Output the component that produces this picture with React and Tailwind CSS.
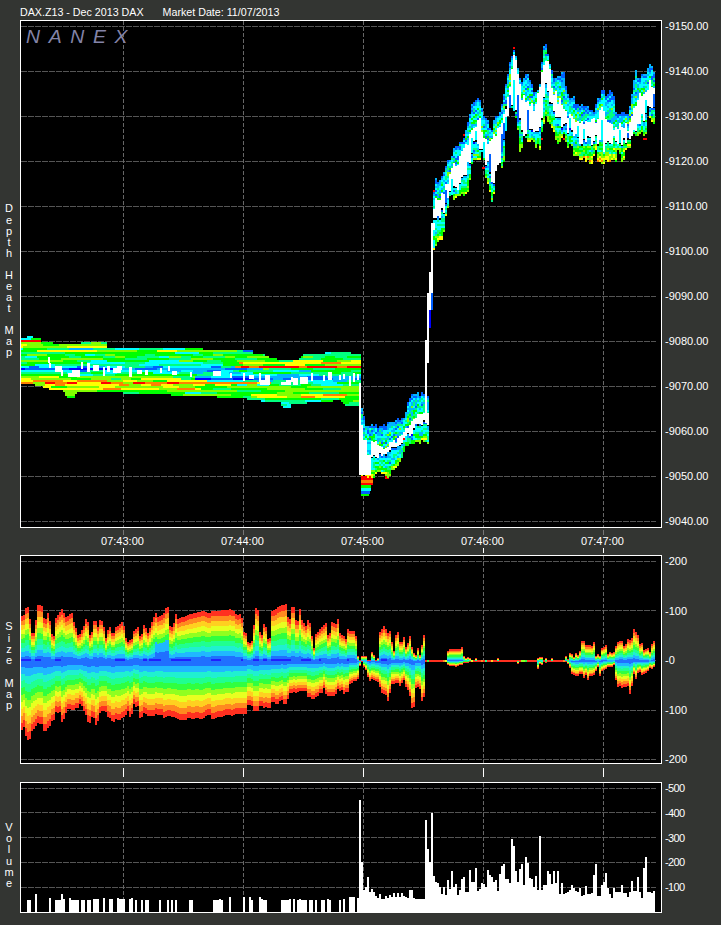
const HEAT = ['#ff0000', '#ff8000', '#ffff00', '#80ff00', '#00ff00', '#00ff80', '#00ffff', '#00b4ff', '#0060ff', '#0000ff'];
const SIZE = ['#ff3020', '#ff8a20', '#ffd020', '#e8ff20', '#90ff20', '#30ff40', '#20ff90', '#20f0d0', '#20b8ff', '#2070ff', '#2020ff'];

const hash = (a, b) => {
  const s = Math.sin(a * 127.1 + b * 311.7) * 43758.5453;
  return s - Math.floor(s);
};

const interp = (pts, x) => {
  if (x <= pts[0][0]) return pts[0][1];
  for (let i = 1; i < pts.length; i++) {
    if (x <= pts[i][0]) {
      const [x0, y0] = pts[i - 1];
      const [x1, y1] = pts[i];
      return y0 + ((y1 - y0) * (x - x0)) / (x1 - x0 || 1);
    }
  }
  return pts[pts.length - 1][1];
};

const rect = (x, y, w, h) => `M${x} ${y}h${w}v${h}h${-w}z`;
const zoomed = (pts) => pts.map(([a, b]) => [420 + a / 3, 30 + b / 3]);

// depth map envelopes
const leftTop = [[21, 338], [40, 338], [41, 342], [65, 344], [80, 344], [81, 342], [105, 342], [106, 347], [130, 347], [175, 348], [230, 350], [252, 350], [253, 354], [263, 354], [270, 358], [283, 360], [296, 360], [300, 356], [305, 354], [323, 354], [324, 351], [350, 351], [351, 354], [360, 354]];
const leftBottom = [[21, 383], [35, 385], [45, 388], [50, 390], [63, 391], [64, 394], [68, 398], [73, 398], [75, 393], [120, 392], [125, 394], [170, 395], [240, 398], [260, 401], [280, 403], [282, 408], [290, 408], [291, 403], [306, 403], [325, 402], [338, 400], [345, 405], [360, 405]];
const leftRowsA = { 336: 6, 338: 4, 340: 0, 342: 4, 344: 3, 346: 3, 348: 5, 350: 3, 352: 4, 354: 4, 356: 4, 358: 4, 360: 4, 362: 5, 364: 5, 366: 6, 368: 8, 370: 6, 372: 5, 374: 4, 376: 3, 378: 3, 380: 2, 382: 1, 384: 2, 386: 3, 388: 2, 390: 3, 392: 4, 394: 4, 396: 4, 398: 5, 400: 5, 402: 5, 404: 6 };
const leftRowsB = { 350: 6, 352: 5, 354: 5, 356: 4, 358: 4, 360: 3, 362: 2, 364: 3, 366: 0, 368: 4, 370: 5, 372: 5, 374: 6, 376: 7, 378: 8, 380: 6, 382: 5, 384: 4, 386: 3, 388: 4, 390: 3, 392: 4, 394: 2, 396: 2, 398: 4, 400: 4, 402: 5, 404: 6, 406: 5, 408: 5 };

const midTop = [[361, 410], [365, 425], [371, 426], [381, 426], [387, 423], [397, 420], [403, 418], [407, 403], [411, 393], [428, 396], [431, 396]];
const midBottom = [[361, 476], [373, 476], [374, 472], [385, 476], [389, 476], [390, 470], [395, 470], [402, 457], [405, 447], [420, 441], [428, 443], [429, 443]];
const midWhiteTop = [[371, 443], [385, 447], [395, 440], [405, 428], [418, 415], [428, 416]];
const midWhiteBottom = [[371, 457], [385, 453], [395, 447], [405, 437], [418, 423], [428, 423]];

const rightTop = zoomed([[33, 535], [45, 450], [65, 440], [90, 370], [125, 320], [135, 295], [155, 210], [175, 205], [190, 260], [215, 290], [240, 230], [265, 100], [280, 55], [295, 130], [305, 170], [318, 120], [330, 170], [355, 170], [372, 35], [385, 100], [400, 135], [430, 135], [440, 190], [460, 190], [470, 230], [520, 240], [530, 190], [550, 190], [565, 180], [580, 190], [585, 235], [625, 235], [635, 180], [645, 130], [670, 130], [690, 85], [700, 130], [705, 200]]);
const rightBottom = zoomed([[39, 655], [60, 630], [80, 570], [90, 510], [120, 500], [150, 470], [155, 390], [185, 390], [200, 460], [215, 530], [225, 430], [250, 400], [255, 240], [290, 290], [300, 390], [310, 320], [360, 355], [375, 260], [395, 300], [415, 345], [430, 340], [470, 385], [510, 400], [530, 390], [550, 405], [560, 390], [585, 390], [630, 385], [635, 310], [670, 320], [680, 340], [680, 265], [705, 280]]);
const whiteTop = zoomed([[33, 535], [60, 500], [100, 410], [135, 350], [155, 290], [175, 270], [195, 330], [215, 330], [245, 260], [265, 190], [280, 70], [290, 130], [300, 190], [310, 210], [340, 230], [365, 130], [380, 80], [395, 180], [430, 240], [480, 280], [525, 270], [545, 240], [575, 290], [625, 290], [640, 220], [670, 190], [690, 160], [705, 170]]);
const whiteBottom = zoomed([[45, 580], [80, 510], [120, 450], [145, 400], [165, 320], [190, 370], [215, 460], [240, 370], [265, 240], [285, 240], [305, 310], [330, 290], [360, 310], [375, 150], [400, 260], [440, 300], [480, 330], [525, 330], [550, 350], [575, 330], [625, 330], [650, 280], [690, 230], [705, 220]]);

const whiteBits = [[48, 357, 2, 6], [49, 363, 2, 5], [55, 366, 7, 6], [61, 370, 2, 6], [68, 373, 12, 4], [72, 370, 8, 3], [81, 362, 2, 7], [87, 363, 3, 9], [93, 365, 6, 6], [103, 367, 2, 9], [107, 366, 3, 6], [113, 368, 8, 5], [117, 366, 5, 4], [129, 367, 3, 10], [137, 370, 5, 4], [145, 370, 3, 5], [160, 368, 2, 5], [168, 366, 2, 5], [172, 371, 5, 4], [190, 372, 2, 5], [213, 371, 8, 5], [230, 373, 2, 5], [243, 373, 2, 8], [249, 375, 5, 4], [259, 373, 2, 9], [265, 375, 5, 7], [260, 380, 10, 5], [281, 382, 7, 3], [286, 380, 5, 5], [291, 377, 2, 5], [293, 378, 5, 7], [300, 377, 8, 7], [311, 373, 2, 8], [323, 375, 2, 6], [328, 372, 4, 8], [339, 375, 2, 5], [343, 374, 2, 5], [349, 376, 2, 10], [353, 373, 2, 9], [357, 374, 2, 6], [359, 383, 2, 42], [359, 425, 4, 50], [363, 440, 4, 35], [367, 455, 4, 20], [425, 340, 4, 23], [425, 363, 2, 60], [425, 343, 4, 7], [427, 310, 2, 33], [427, 293, 4, 17], [429, 272, 4, 21], [431, 230, 2, 42], [431, 223, 4, 7]];

const redLines = [[21, 340, 18, 2], [155, 366, 205, 2], [35, 382, 8, 2], [105, 384, 60, 2], [100, 386, 75, 1], [433, 190, 10, 2], [448, 167, 5, 2], [463, 134, 5, 2], [473, 138, 4, 2], [482, 167, 5, 2], [497, 116, 6, 2], [530, 97, 8, 2], [532, 138, 11, 2], [544, 47, 2, 2], [513, 47, 2, 2], [563, 138, 12, 2], [576, 120, 19, 2], [617, 116, 11, 2], [635, 87, 2, 2], [640, 100, 3, 2], [643, 138, 4, 2], [397, 427, 6, 2], [403, 438, 10, 2], [385, 476, 4, 3], [361, 476, 12, 4]];
const orangeLines = [[81, 345, 24, 2], [407, 430, 21, 2], [361, 480, 12, 3]];
const extras = [[361, 483, 12, 2, 0], [361, 485, 10, 3, 4], [361, 488, 10, 3, 6], [361, 491, 9, 3, 8], [361, 494, 8, 2, 4], [431, 290, 2, 20, 8], [429, 310, 2, 18, 9], [433, 240, 2, 8, 6], [27, 336, 6, 2, 6]];

const jump = (v) => (v < 0.5 ? 0 : v < 0.72 ? 1 : v < 0.94 ? -1 : 2);
const clampIdx = (i) => Math.max(0, Math.min(9, i));

const buildDepth = () => {
  const paths = HEAT.map(() => '');
  let white = '';
  const put = (i, x, y, w, h) => {
    paths[i] += rect(x, y, w, h);
  };

  for (let x = 21; x < 361; x += 2) {
    const top = Math.round(interp(leftTop, x) / 2) * 2;
    const bottom = Math.round(interp(leftBottom, x) / 2) * 2;
    for (let y = top; y < bottom; y += 2) {
      const table = x < 190 + hash(y, 77) * 80 ? leftRowsA : leftRowsB;
      const base = table[y] ?? 5;
      const seg = Math.floor((x + y * 5) / (8 + hash(y, 5) * 16));
      put(clampIdx(base + jump(hash(y, seg))), x, y, 2, 2);
    }
  }

  const columnAround = (x, top, bottom, wTop, wBottom, stripes) => {
    for (let y = top; y < bottom; y += 2) {
      const seg = Math.floor((x + y * 3) / (stripes ? 14 : 5));
      const n = jump(hash(y + 1, seg));
      let idx;
      if (y < wTop) {
        const f = (y - top) / Math.max(wTop - top, 1);
        const r = hash(x + y, seg);
        if (f < 0.14) idx = r < 0.6 ? 8 : 7;
        else if (f < 0.45) idx = r < 0.12 ? 8 : r < 0.45 ? 7 : r < 0.85 ? 6 : 5;
        else idx = r < 0.1 ? 8 : r < 0.25 ? 7 : r < 0.55 ? 6 : r < 0.75 ? 5 : r < 0.92 ? 4 : 3;
      } else {
        const f = (y - wBottom) / Math.max(bottom - wBottom, 1);
        const level = stripes
          ? [6, 5, 5, 4, 4, 3, 4, 3, 2, 3][Math.min(9, Math.floor(f * 10))]
          : [7, 6, 6, 5, 6, 5, 4, 4, 3, 3][Math.min(9, Math.floor(f * 10))];
        idx = clampIdx(level + n);
      }
      put(idx, x, y, 2, 2);
    }
  };

  for (let x = 361; x < 429; x += 2) {
    const top = Math.round((interp(midTop, x) + (hash(x, 41) - 0.5) * 4) / 2) * 2;
    const bottom = Math.round((interp(midBottom, x) + (hash(x, 42) - 0.5) * 5) / 2) * 2;
    const wT = x < 371 ? 440 : interp(midWhiteTop, x) + (hash(x, 43) - 0.5) * 6;
    const wB = x < 371 ? 440 : interp(midWhiteBottom, x) + (hash(x, 44) - 0.5) * 6;
    columnAround(x, top, bottom, wT, wB, false);
    if (x >= 371) white += rect(x, Math.round(wT), 2, Math.max(2, Math.round(wB - wT)));
  }

  for (let x = 433; x < 655; x += 2) {
    const block = Math.floor(x / 4);
    const top = Math.round((interp(rightTop, x) + (hash(block, 3) - 0.4) * 9) / 2) * 2;
    const bottom = Math.round((interp(rightBottom, x) + (hash(x, 9) - 0.5) * 7 - (hash(block, 10) > 0.8 ? 8 : 0)) / 2) * 2;
    const wT = interp(whiteTop, x) + (hash(x, 12) - 0.5) * 10;
    const wB = Math.max(interp(whiteBottom, x) + (hash(x, 13) - 0.5) * 12, wT + 4);
    columnAround(x, top, bottom, wT, wB, x > 575 && x < 632);
    // the white band is broken up by darker columns
    if (hash(x, 14) > 0.84) {
      const mid = Math.round((wT + wB) / 2);
      white += rect(x, Math.round(wT), 2, Math.max(2, mid - Math.round(wT) - 3));
      paths[hash(x, 15) > 0.5 ? 8 : 6] += rect(x, mid - 3, 2, Math.round(wB) - mid + 3);
    } else {
      white += rect(x, Math.round(wT), 2, Math.round(wB - wT));
    }
  }

  extras.forEach(([x, y, w, h, c]) => put(c, x, y, w, h));
  redLines.forEach(([x, y, w, h]) => put(0, x, y, w, h));
  orangeLines.forEach(([x, y, w, h]) => put(1, x, y, w, h));
  whiteBits.forEach(([x, y, w, h]) => {
    white += rect(x, y, w, h);
  });
  return { paths, white };
};

// size map envelopes: distance from the top and bottom edge at each x
const sizeTop = [[21, 610], [28, 608], [29, 620], [33, 620], [37, 608], [48, 612], [52, 625], [62, 609], [64, 620], [72, 613], [78, 633], [87, 614], [90, 633], [93, 616], [103, 617], [105, 628], [117, 625], [122, 620], [125, 637], [132, 633], [143, 623], [147, 632], [155, 613], [167, 605], [168, 627], [172, 625], [175, 612], [177, 617], [197, 612], [230, 609], [240, 615], [250, 620], [255, 608], [265, 620], [285, 608], [300, 613], [310, 628], [330, 610], [340, 615], [348, 627], [355, 627], [358, 657], [370, 658], [373, 647], [377, 640], [382, 632], [385, 628], [388, 633], [390, 627], [393, 640], [397, 628], [402, 627], [405, 643], [410, 633], [415, 647], [418, 637], [423, 638], [425, 659]];
const sizeBottom = [[21, 737], [28, 739], [33, 733], [37, 728], [48, 728], [52, 720], [62, 725], [67, 710], [80, 707], [87, 719], [95, 723], [100, 713], [107, 715], [117, 721], [127, 710], [130, 719], [143, 713], [167, 717], [175, 718], [178, 719], [210, 719], [230, 716], [240, 713], [250, 712], [270, 705], [300, 700], [330, 695], [340, 699], [348, 690], [357, 682], [360, 663], [365, 670], [370, 680], [378, 683], [383, 697], [387, 700], [390, 688], [398, 688], [403, 680], [408, 697], [412, 706], [415, 698], [420, 697], [423, 699], [425, 660]];
const sizeTopEnd = [[565, 659], [567, 657], [578, 657], [580, 645], [593, 642], [595, 657], [603, 647], [613, 655], [617, 640], [623, 647], [635, 629], [638, 643], [645, 650], [649, 648], [652, 642], [655, 643]];
const sizeBottomEnd = [[565, 661], [567, 668], [573, 677], [580, 672], [590, 680], [597, 668], [600, 675], [613, 667], [617, 690], [627, 690], [628, 697], [633, 677], [643, 672], [652, 667], [655, 663]];
const bumps = { 447: [10, 4], 449: [12, 5], 451: [12, 5], 453: [12, 5], 455: [12, 6], 457: [12, 5], 459: [12, 4], 461: [14, 4], 463: [5, 2], 465: [3, 2], 467: [4, 2], 469: [3, 1], 475: [3, 1], 497: [3, 1], 510: [1, 3], 517: [1, 3], 537: [3, 8], 539: [4, 3], 541: [4, 4], 545: [3, 2], 551: [3, 1] };

// how deep the jagged dips in the size map edge go
const dipAmount = (x) => {
  if (x < 165) return 14;
  if (x < 240) return 4;
  if (x < 360) return 26;
  return 20;
};

const buildSize = () => {
  const paths = SIZE.map(() => '');
  const center = 661;
  for (let x = 21; x < 655; x += 2) {
    let up;
    let down;
    if (x < 425) {
      const blockA = Math.floor(x / 6);
      const blockB = Math.floor((x + 2) / 4);
      const amp = dipAmount(x);
      const lowAmp = x >= 240 && x < 360 ? 10 : amp;
      up = center - interp(sizeTop, x) - hash(blockA, 21) * amp * 0.7 - (hash(blockB, 25) > 0.75 ? amp * 0.5 : 0) + amp * 0.25;
      down = interp(sizeBottom, x) - center - hash(blockB, 22) * lowAmp * 0.6 - (hash(blockA, 26) > 0.8 ? lowAmp * 0.6 : 0) + lowAmp * 0.25;
    } else if (x < 565) {
      const b = bumps[x] ?? [1, 1];
      up = b[0];
      down = b[1];
    } else {
      up = center - interp(sizeTopEnd, x) + (hash(x, 23) - 0.5) * 8;
      down = interp(sizeBottomEnd, x) - center + (hash(x, 24) - 0.5) * 8;
    }
    up = Math.max(1, Math.round(up));
    down = Math.max(1, Math.round(down));
    if (up + down <= 2) {
      const c = hash(x, 30) > 0.8 ? Math.floor(hash(x, 31) * 8) : 0;
      paths[c] += rect(x, center - 1, 2, 2);
      continue;
    }
    for (let d = 0; d < up; d += 1) {
      let band = Math.min(9, Math.floor(((up - d - 1) / up) * 10));
      if (x >= 155 && x <= 167 && band >= 6) band = 8 + (band > 7 ? 1 : 0);
      if (d < 2 && up > 30 && hash(Math.floor(x / 10), 33) > 0.35) band = 10;
      paths[band] += rect(x, center - d - 1, 2, 1);
    }
    for (let d = 0; d < down; d += 1) {
      const band = Math.min(9, Math.floor(((down - d - 1) / down) * 10));
      paths[band] += rect(x, center + d, 2, 1);
    }
  }
  return paths;
};

// volume bars, left side has gaps so it is kept as [start, end, height]
const volumeLeft = [[27, 31, 12], [35, 37, 18], [49, 51, 14], [55, 61, 12], [61, 63, 18], [63, 65, 13], [69, 71, 14], [71, 79, 12], [81, 85, 12], [87, 91, 12], [93, 99, 13], [103, 105, 14], [109, 113, 13], [117, 119, 14], [119, 125, 13], [129, 131, 13], [131, 133, 14], [135, 137, 12], [141, 143, 12], [145, 149, 12], [159, 161, 12], [167, 169, 12], [171, 173, 12], [175, 177, 12], [189, 193, 12], [213, 219, 12], [219, 221, 13], [221, 223, 12], [229, 231, 15], [243, 245, 15], [249, 251, 15], [251, 253, 12], [259, 261, 15], [261, 263, 13], [263, 267, 12], [281, 289, 12], [289, 291, 13], [293, 295, 13], [297, 299, 12], [299, 301, 13], [301, 307, 12], [309, 313, 12], [315, 317, 12], [321, 325, 12], [327, 329, 13], [329, 331, 12], [339, 341, 12], [343, 345, 13], [349, 351, 15], [351, 353, 14], [353, 355, 12], [357, 359, 13]];
const volumeRight = [15, 15, 15, 0, 14, 112, 50, 22, 25, 35, 20, 23, 20, 16, 14, 18, 13, 13, 16, 14, 17, 15, 19, 15, 19, 15, 19, 16, 15, 14, 22, 22, 14, 13, 13, 13, 13, 13, 92, 63, 50, 99, 36, 30, 29, 25, 18, 25, 17, 32, 23, 41, 25, 28, 17, 22, 33, 35, 20, 20, 42, 30, 30, 44, 21, 23, 29, 28, 25, 42, 37, 35, 30, 32, 21, 38, 46, 48, 33, 33, 29, 73, 66, 41, 30, 43, 48, 27, 55, 49, 34, 33, 25, 36, 22, 76, 22, 27, 27, 41, 38, 28, 41, 29, 41, 18, 29, 18, 19, 20, 22, 27, 24, 21, 20, 24, 16, 17, 26, 18, 18, 19, 37, 48, 16, 16, 27, 30, 39, 24, 18, 14, 24, 20, 20, 20, 27, 19, 19, 15, 20, 31, 21, 21, 35, 20, 14, 44, 55, 20, 20, 19, 21];

const depth = buildDepth();
const sizePaths = buildSize();
const volumePath =
  volumeLeft.map(([a, b, h]) => rect(a, 912 - h, b - a, h)).join('') +
  volumeRight.map((h, i) => rect(349 + i * 2, 912 - h, 2, h)).join('');

const TIMES = [123, 243, 363, 483, 603];

const Grid = ({ rows, top, bottom }) => (
  <g shapeRendering="crispEdges" fill="none">
    {rows.map((y) => (
      <path key={y} d={`M21 ${y + 0.5}H656`} stroke="#555" strokeDasharray="6 1" />
    ))}
    {TIMES.map((x) => (
      <path key={x} d={`M${x + 0.5} ${top}V${bottom}`} stroke="#666" strokeDasharray="4 2" />
    ))}
  </g>
);

const SideLabel = ({ text, step, offset }) => (
  <div className={`w-[20px] pr-[2px] flex flex-col items-center justify-center text-white text-[11px] ${offset}`}>
    {text.split('').map((ch, i) => (
      <div key={i} className={`${step} w-full text-center`}>
        {ch === ' ' ? '\u00a0' : ch}
      </div>
    ))}
  </div>
);

const Axis = ({ labels, gap, tight }) => (
  <div className={`pl-[3px] flex flex-col text-[11px] text-white ${gap} ${tight ? 'tracking-[-0.6px]' : ''}`}>
    {labels.map((l) => (
      <div key={l} className="h-[13px] leading-[13px]">
        -{l}
      </div>
    ))}
  </div>
);

export default function App() {
  return (
    <div className="relative w-[721px] h-[925px] overflow-hidden bg-[#333532] text-white font-['Liberation_Sans',Arial,sans-serif]">
      <div className="h-[20px] pl-[20px] flex items-end gap-[19px] text-[10.7px] leading-[15px]">
        <span>DAX.Z13 - Dec 2013 DAX</span>
        <span>Market Date: 11/07/2013</span>
      </div>

      <div className="flex h-[508px]">
        <SideLabel text="Depth Heat Map" step="h-[11.08px] leading-[11px]" offset="pt-[14px]" />
        <div className="relative w-[642px] border border-white bg-black">
          <svg className="block" width="640" height="506" viewBox="21 21 640 506">
            <Grid rows={[26, 71, 116, 161, 206, 251, 296, 341, 386, 431, 476, 521]} top={21} bottom={527} />
            <g shapeRendering="crispEdges">
              {depth.paths.map((d, i) => (
                <path key={i} d={d} fill={HEAT[i]} />
              ))}
              <path d={depth.white} fill="#fff" />
            </g>
          </svg>
          <div className="absolute left-[5px] top-[6px] text-[18px] leading-[20px] italic tracking-[8px] text-[#8484a8] origin-left scale-x-[1.08]">NANEX</div>
        </div>
        <Axis labels={['9150.00', '9140.00', '9130.00', '9120.00', '9110.00', '9100.00', '9090.00', '9080.00', '9070.00', '9060.00', '9050.00', '9040.00']} gap="gap-[32px]" />
      </div>

      <div className="h-[27px] pl-[63.5px] flex text-[11px]">
        {['07:43:00', '07:44:00', '07:45:00', '07:46:00', '07:47:00'].map((t) => (
          <div key={t} className="w-[120px] flex flex-col items-center">
            <div className="w-px h-[5px] mt-[2px] bg-[#777]" />
            <div className="h-[13px] leading-[13px] text-white -translate-x-px">{t}</div>
            <div className="w-px h-[5px] bg-white" />
          </div>
        ))}
      </div>

      <div className="flex h-[209px]">
        <SideLabel text="Size Map" step="h-[11.3px] leading-[11px]" offset="pt-[14px]" />
        <div className="w-[642px] border border-white bg-black">
          <svg className="block" width="640" height="207" viewBox="21 556 640 207">
            <Grid rows={[561, 610, 660, 710, 759]} top={556} bottom={763} />
            <g shapeRendering="crispEdges">
              {sizePaths.map((d, i) => (
                <path key={i} d={d} fill={SIZE[i]} />
              ))}
            </g>
          </svg>
        </div>
        <Axis labels={['200', '100', '0', '100 ', '200 ']} gap="gap-[36.5px]" />
      </div>

      <div className="h-[18px] pl-[63.5px] flex">
        {TIMES.map((x) => (
          <div key={x} className="w-[120px] flex justify-center">
            <div className="w-px h-[9px] mt-[4px] bg-white" />
          </div>
        ))}
      </div>

      <div className="flex h-[131px]">
        <SideLabel text="Volume" step="h-[11.2px] leading-[11px]" offset="pt-[16px]" />
        <div className="w-[642px] border border-white bg-black">
          <svg className="block" width="640" height="129" viewBox="21 783 640 129">
            <Grid rows={[788, 812, 837, 862, 887]} top={783} bottom={912} />
            <path d={volumePath} fill="#fff" shapeRendering="crispEdges" />
          </svg>
        </div>
        <Axis labels={['500', '400', '300', '200', '100']} gap="gap-[11.75px]" tight />
      </div>
    </div>
  );
}
